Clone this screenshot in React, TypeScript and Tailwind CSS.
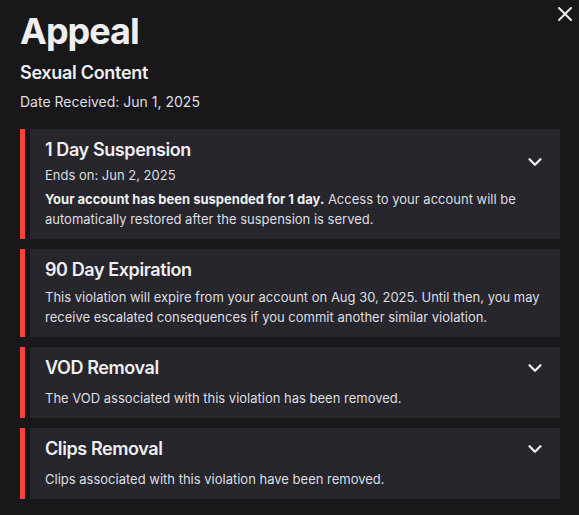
import { X, ChevronDown } from "lucide-react"

type Item = {
  title: string
  sub?: string
  body: React.ReactNode
  open: boolean
  gap: string
}

const items: Item[] = [
  {
    title: "1 Day Suspension",
    sub: "Ends on: Jun 2, 2025",
    body: (
      <>
        <span className="font-bold text-[#efeff1]">Your account has been suspended for 1 day.</span> Access to your account will be
        automatically restored after the suspension is served.
      </>
    ),
    open: true,
    gap: "mt-[4px]",
  },
  {
    title: "90 Day Expiration",
    body: "This violation will expire from your account on Aug 30, 2025. Until then, you may receive escalated consequences if you commit another similar violation.",
    open: false,
    gap: "mt-[6px]",
  },
  {
    title: "VOD Removal",
    body: "The VOD associated with this violation has been removed.",
    open: true,
    gap: "mt-[9px]",
  },
  {
    title: "Clips Removal",
    body: "Clips associated with this violation have been removed.",
    open: true,
    gap: "mt-[9px]",
  },
]

function Card({ item }: { item: Item }) {
  return (
    <div className="flex gap-[5px]">
      <div className="w-[5px] shrink-0 bg-[#f5403f]"></div>
      <div className="flex-1 bg-[#26262c] pt-[10px] pb-[10px] pl-[15px] pr-[15px]">
        <div className="flex items-center justify-between">
          <div>
            <p className="text-[18px] leading-[22px] font-semibold tracking-[-0.4px] text-[#efeff1]">{item.title}</p>
            {item.sub && <p className="mt-[4px] text-[13px] leading-[20px] text-[#dedee3]">{item.sub}</p>}
          </div>
          {item.open && (
            <div className="w-[20px] h-[20px] flex items-center justify-center text-[#efeff1]">
              <ChevronDown className="w-[22px] h-[22px] shrink-0" strokeWidth={2.5} />
            </div>
          )}
        </div>
        <p className={item.gap + " text-[13px] leading-[20px] text-[#dedee3]"}>{item.body}</p>
      </div>
    </div>
  )
}

export default function App() {
  return (
    <main
      className="relative w-[579px] h-[515px] overflow-hidden bg-[#18181b] pl-[20px] pr-[19px] pt-[9px]"
      style={{ fontFamily: "Inter, 'Noto Sans', sans-serif" }}
    >
      <button className="absolute top-[2px] right-[2px] w-[24px] h-[24px] flex items-center justify-center text-[#efeff1]">
        <X className="w-[24px] h-[24px]" strokeWidth={2} />
      </button>
      <h1 className="text-[36px] leading-[44px] font-bold tracking-[-1px] text-[#efeff1]">Appeal</h1>
      <h2 className="mt-[8px] text-[18px] leading-[24px] font-semibold tracking-[-0.3px] text-[#efeff1]">Sexual Content</h2>
      <p className="mt-[7px] text-[14px] leading-[20px] text-[#dedee3]">Date Received: Jun 1, 2025</p>
      <div className="mt-[17px] flex flex-col gap-[10px]">
        {items.map((it) => (
          <Card key={it.title} item={it} />
        ))}
      </div>
    </main>
  )
}
